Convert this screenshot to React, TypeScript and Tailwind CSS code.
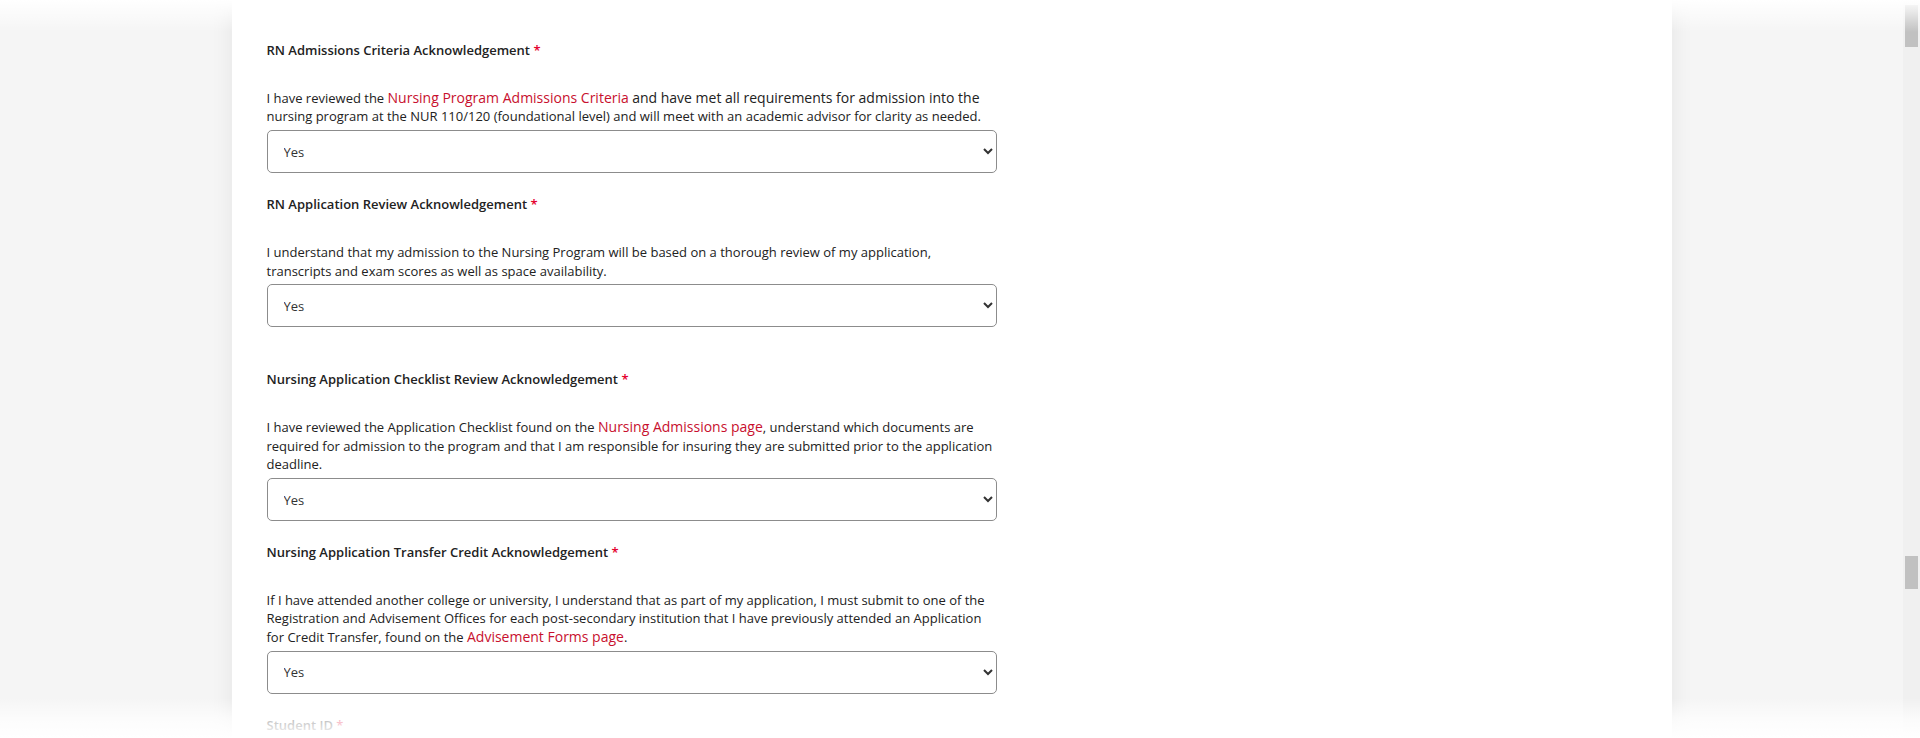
import React from 'react';

type Block = {
  title: string;
  body: React.ReactNode;
  spaced?: boolean;
};

const Link = ({ children }: { children: React.ReactNode }) => (
  <a href="#" className="text-[14px] leading-[18px] text-[#c8102e]">
    {children}
  </a>
);

const blocks: Block[] = [
  {
    title: 'RN Admissions Criteria Acknowledgement',
    body: (
      <>
        I have reviewed the <Link>Nursing Program Admissions Criteria</Link>{' '}
        <span className="text-[14px] leading-[18px]">
          and have met all requirements for admission into the
        </span>{' '}
        nursing program at the NUR 110/120 (foundational level) and will meet with an academic
        advisor for clarity as needed.
      </>
    ),
  },
  {
    title: 'RN Application Review Acknowledgement',
    body: (
      <>
        I understand that my admission to the Nursing Program will be based on a thorough review of my
        application, transcripts and exam scores as well as space availability.
      </>
    ),
  },
  {
    title: 'Nursing Application Checklist Review Acknowledgement',
    spaced: true,
    body: (
      <>
        I have reviewed the Application Checklist found on the <Link>Nursing Admissions page</Link>,
        understand which documents are required for admission to the program and that I am
        responsible for insuring they are submitted prior to the application deadline.
      </>
    ),
  },
  {
    title: 'Nursing Application Transfer Credit Acknowledgement',
    body: (
      <>
        If I have attended another college or university, I understand that as part of my application,
        I must submit to one of the Registration and Advisement Offices for each post-secondary
        institution that I have previously attended an Application for Credit Transfer, found on the{' '}
        <Link>Advisement Forms page</Link>.
      </>
    ),
  },
];

export default function App() {
  return (
    <div
      className="relative flex h-[738px] overflow-hidden bg-[#f5f5f5] text-[#222]"
      style={{ fontFamily: '"Open Sans", "Noto Sans", sans-serif' }}
    >
      <div className="flex flex-1 justify-center">
        <div className="w-[1440px] bg-white px-[35px] pt-[41px] shadow-[0_0_22px_rgba(0,0,0,0.07)]">
          <div className="w-[732px]">
            {blocks.map((b, i) => (
              <div key={i} className={i === 0 ? '' : b.spaced ? 'mt-[43px]' : 'mt-[22px]'}>
                <div className="text-[13px] font-semibold leading-[18.7px]">
                  {b.title} <span className="text-[#e4002b]">*</span>
                </div>
                <p className="mt-[29px] text-[13px] leading-[18.7px]">{b.body}</p>
                <select
                  defaultValue="Yes"
                  className="mt-[4px] block h-[43px] w-[730px] rounded-[5px] border border-[#8c8c8c] pl-[12px] pr-[6px] text-[13px] text-[#333]"
                >
                  <option>Yes</option>
                  <option>No</option>
                </select>
              </div>
            ))}
            <div className="mt-[22px] text-[13px] font-semibold leading-[18.7px]">
              Student ID <span className="text-[#e4002b]">*</span>
            </div>
          </div>
        </div>
      </div>

      {/* scrollbar */}
      <div className="flex w-[17px] flex-col items-center bg-[#f0f0f0]">
        <div className="mt-[5px] h-[42px] w-[13px] bg-[#c1c1c1]" />
        <div className="mt-[509px] h-[33px] w-[13px] bg-[#c1c1c1]" />
      </div>

      {/* fades */}
      <div className="pointer-events-none absolute inset-x-0 top-0 h-[32px] bg-linear-to-b from-white to-transparent" />
      <div className="pointer-events-none absolute inset-x-0 bottom-0 h-[40px] bg-linear-to-t from-white via-white/70 to-transparent" />
    </div>
  );
}
